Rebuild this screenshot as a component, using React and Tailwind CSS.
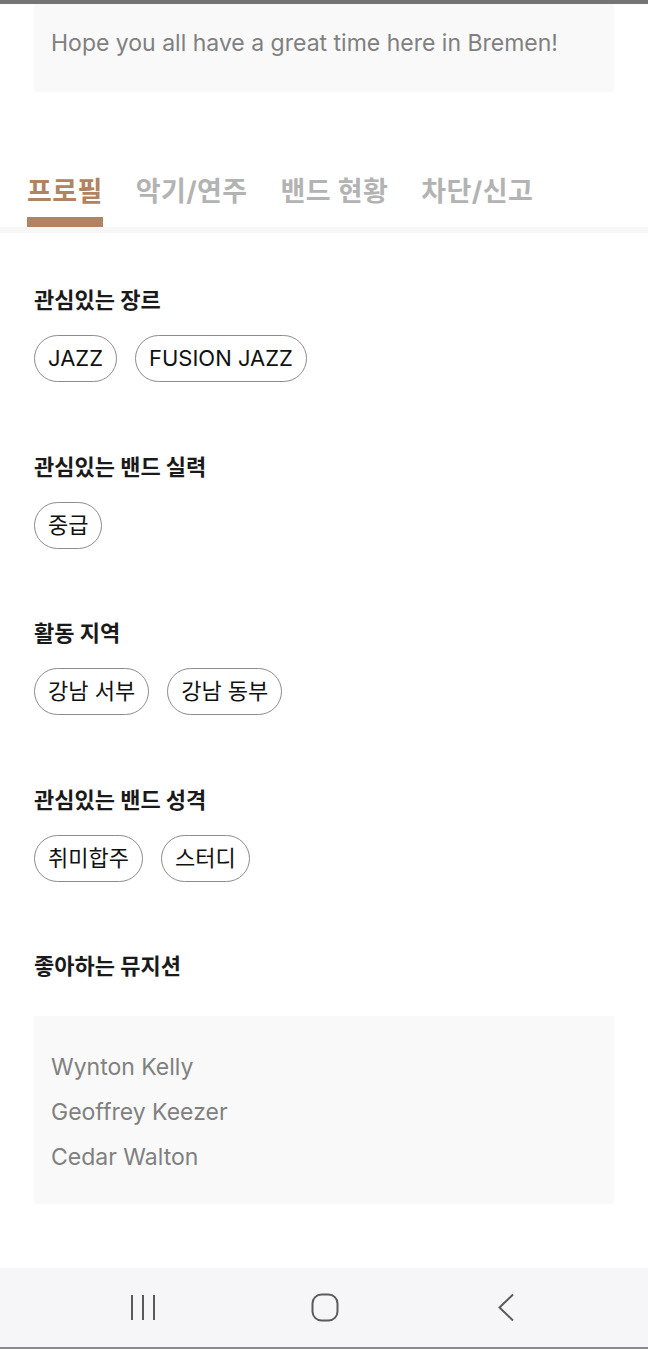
import React from 'react';

const sections = [
  { title: '관심있는 장르', chips: ['JAZZ', 'FUSION JAZZ'] },
  { title: '관심있는 밴드 실력', chips: ['중급'] },
  { title: '활동 지역', chips: ['강남 서부', '강남 동부'] },
  { title: '관심있는 밴드 성격', chips: ['취미합주', '스터디'] },
];

const tabs = ['프로필', '악기/연주', '밴드 현황', '차단/신고'];

const musicians = ['Wynton Kelly', 'Geoffrey Keezer', 'Cedar Walton'];

const App = () => {
  return (
    <div
      className="w-[648px] min-h-[1349px] bg-white flex flex-col"
      style={{ fontFamily: 'Inter, "Noto Sans CJK KR", sans-serif' }}
    >
      <div className="h-[4px] bg-[#757575]" />

      {/* Greeting */}
      <div className="px-[34px]">
        <div className="h-[88px] bg-[#f9f9f9] px-[17px] pt-[25px]">
          <p className="text-[23px] leading-[28px] text-[#808080]">
            Hope you all have a great time here in Bremen!
          </p>
        </div>
      </div>

      {/* Tabs */}
      <div className="mt-[84px] flex gap-[33px] pl-[27px]">
        {tabs.map((tab, i) => (
          <div key={tab} className="flex flex-col">
            <span
              className={`text-[27px] leading-[32px] font-bold tracking-[0.4px] ${
                i === 0 ? 'text-[#b08462]' : 'text-[#b3b3b3]'
              }`}
            >
              {tab}
            </span>
            <div className={`mt-[9px] h-[10px] ${i === 0 ? 'bg-[#b08462]' : 'bg-transparent'}`} />
          </div>
        ))}
      </div>
      <div className="h-[6px] bg-[#f7f7f7]" />

      {/* Profile content */}
      <div className="px-[34px] pt-[53px]">
        {sections.map((s) => (
          <div key={s.title} className="mb-[70.5px]">
            <h3 className="text-[22px] leading-[28px] font-bold text-[#1a1a1a]">{s.title}</h3>
            <div className="mt-[21px] flex gap-[18px]">
              {s.chips.map((c) => (
                <span
                  key={c}
                  className="h-[47px] px-[13px] flex items-center rounded-full border border-[#8c8c8c] text-[22px] text-[#111]"
                >
                  {c}
                </span>
              ))}
            </div>
          </div>
        ))}

        <h3 className="text-[22px] leading-[28px] font-bold text-[#1a1a1a]">좋아하는 뮤지션</h3>
        <div className="mt-[36px] bg-[#f9f9f9] px-[17px] pt-[29px] pb-[24px]">
          {musicians.map((m) => (
            <p key={m} className="text-[23px] leading-[45px] text-[#808080]">
              {m}
            </p>
          ))}
        </div>
      </div>

      {/* Android nav bar */}
      <div className="mt-auto h-[81px] bg-[#f6f6f8] border-b-2 border-[#8a8a8a] flex items-center pl-[129px]">
        <svg width="28" height="27" viewBox="0 0 28 27" fill="none" stroke="#5a5a5a" strokeWidth="2">
          <path d="M3 1v25M14 1v25M25 1v25" />
        </svg>
        <svg className="ml-[154px]" width="28" height="29" viewBox="0 0 28 29" fill="none" stroke="#5a5a5a" strokeWidth="2">
          <rect x="1.5" y="1.5" width="25" height="26" rx="9" />
        </svg>
        <svg className="ml-[158px]" width="18" height="29" viewBox="0 0 18 29" fill="none" stroke="#5a5a5a" strokeWidth="2">
          <path d="M16 1.5L2.5 14.5L16 27.5" />
        </svg>
      </div>
    </div>
  );
};

export default App;
